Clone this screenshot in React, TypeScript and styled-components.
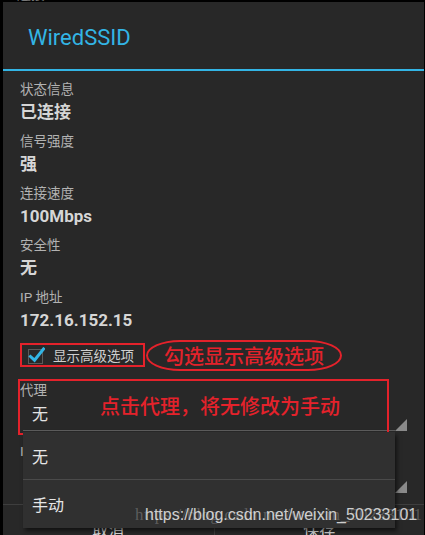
import React from "react";
import styled, { createGlobalStyle } from "styled-components";

const GlobalStyle = createGlobalStyle`
  html, body {
    margin: 0;
    padding: 0;
    background: #000;
  }
  body {
    font-family: Roboto, "Noto Sans CJK SC", sans-serif;
  }
`;

const ACCENT = "#33b5e5";
const NOTE_RED = "#e4222b";
const CJK = `Roboto, "Noto Sans CJK SC", sans-serif`;

const Screen = styled.div`
  width: 425px;
  height: 535px;
  overflow: hidden;
  background: #000;
  padding: 0 1px 0 3px;
  box-sizing: border-box;
  display: flex;
  flex-direction: column;
`;

const TopStrip = styled.div`
  height: 2px;
  overflow: hidden;
  flex-shrink: 0;
`;

const ClippedText = styled.div`
  margin-top: -13px;
  font-family: ${CJK};
  font-size: 14px;
  line-height: 14px;
  color: #777;
`;

const Dialog = styled.div`
  position: relative;
  flex: 1;
  background: #282828;
  display: flex;
  flex-direction: column;
  overflow: hidden;

  & > * {
    flex-shrink: 0;
  }
`;

const Header = styled.div`
  height: 64px;
  display: flex;
  align-items: center;
  padding: 3px 0 0 25px;
  box-sizing: content-box;
  border-bottom: 2px solid ${ACCENT};
`;

const Title = styled.h1`
  margin: 0;
  font-family: Roboto, sans-serif;
  font-weight: 400;
  font-size: 22px;
  color: ${ACCENT};
`;

const Body = styled.div`
  padding: 8px 17px 0 17px;
  display: flex;
  flex-direction: column;
`;

const Field = styled.div`
  display: flex;
  flex-direction: column;
  margin-bottom: 6px;
`;

const Label = styled.div`
  font-family: ${CJK};
  font-size: 13.5px;
  line-height: 20px;
  color: #b2b2b2;
  white-space: nowrap;
`;

const Value = styled.div`
  font-family: ${CJK};
  font-size: 17px;
  font-weight: 700;
  line-height: 26px;
  color: #d6d6d6;
`;

const CheckRow = styled.div`
  height: 32px;
  display: flex;
  align-items: center;
`;

const NoteBox = styled.div`
  border: 2px solid ${NOTE_RED};
  box-sizing: border-box;
`;

const CheckNote = styled(NoteBox)`
  width: 125px;
  height: 24px;
  display: flex;
  align-items: center;
  gap: 8px;
  padding-left: 6px;
`;

const CheckLabel = styled.span`
  font-family: ${CJK};
  font-size: 13.5px;
  color: #cfcfcf;
`;

const NoteOval = styled(NoteBox)`
  width: 196px;
  height: 31px;
  margin-left: 1px;
  border-radius: 34px / 15.5px;
  display: flex;
  align-items: center;
  justify-content: center;
`;

const NoteText = styled.span`
  font-family: "Noto Sans CJK SC", sans-serif;
  font-size: 20px;
  font-weight: 500;
  color: ${NOTE_RED};
  white-space: nowrap;
`;

const SpinnerField = styled.div<{ $top: number }>`
  position: relative;
  margin-top: ${(p) => p.$top}px;
  display: flex;
  flex-direction: column;
`;

const SpinnerRow = styled.div<{ $top?: number }>`
  display: flex;
  align-items: flex-end;
  margin: ${(p) => p.$top ?? 0}px 0 0 3px;
`;

const SpinnerValue = styled.div`
  flex: 1;
  height: 30px;
  line-height: 30px;
  padding-left: 9px;
  border-bottom: 1px solid #5c5c5c;
  font-family: ${CJK};
  font-size: 16px;
  color: #e2e2e2;
`;

const SpinnerNote = styled(NoteBox)`
  position: absolute;
  left: -2px;
  top: -1px;
  width: 371px;
  height: 56px;
  display: flex;
  align-items: center;
  padding: 0 0 4px 80px;
`;

const ButtonBar = styled.div`
  margin-top: 11px;
  border-top: 1px solid #3e3e3e;
  display: grid;
  grid-template-columns: 1fr 1fr;
`;

const BarButton = styled.div<{ $divider?: boolean }>`
  height: 48px;
  display: flex;
  align-items: center;
  justify-content: center;
  border-left: ${(p) => (p.$divider ? "1px solid #3e3e3e" : "none")};
  font-family: ${CJK};
  font-size: 16px;
  color: #d8d8d8;
`;

const Popup = styled.ul`
  position: absolute;
  left: 20px;
  top: 430px;
  width: 372px;
  margin: 0;
  padding: 0;
  list-style: none;
  background: #303030;
  box-shadow: 2px 3px 4px rgba(0, 0, 0, 0.55);
`;

const PopupItem = styled.li<{ $last?: boolean }>`
  height: 48px;
  box-sizing: border-box;
  display: flex;
  align-items: center;
  padding-left: 9px;
  border-bottom: ${(p) => (p.$last ? "none" : "1px solid #4a4a4a")};
  font-family: ${CJK};
  font-size: 16px;
  color: #e6e6e6;
`;

const Watermark = styled.div`
  position: absolute;
  left: 142px;
  top: 503px;
  font-family: "Liberation Sans", Arial, sans-serif;
  font-size: 16px;
  line-height: 20px;
  color: rgba(235, 235, 235, 0.85);
  white-space: nowrap;
  pointer-events: none;
`;

const WatermarkGhost = styled(Watermark)`
  left: 132px;
  font-family: "Liberation Serif", serif;
  font-size: 17px;
  color: rgba(200, 200, 200, 0.3);
  letter-spacing: 0.6px;
`;

const Checkbox = () => (
  <svg width="17" height="17" viewBox="0 0 17 17">
    <rect x="0.5" y="2.5" width="14" height="14" fill="none" stroke="#5a5a5a" />
    <path
      d="M2.5 9.5 L6.5 13.2 L15.5 2"
      fill="none"
      stroke={ACCENT}
      strokeWidth="3"
      strokeLinecap="square"
    />
  </svg>
);

const Corner = () => (
  <svg width="12" height="12" viewBox="0 0 12 12">
    <path d="M12 0 L12 12 L0 12 Z" fill="#8a8a8a" />
  </svg>
);

const info = [
  { label: "状态信息", value: "已连接" },
  { label: "信号强度", value: "强" },
  { label: "连接速度", value: "100Mbps" },
  { label: "安全性", value: "无" },
  { label: "IP 地址", value: "172.16.152.15" },
];

export default function App() {
  return (
    <>
      <GlobalStyle />
      <Screen>
        <TopStrip>
          <ClippedText>已连接</ClippedText>
        </TopStrip>
        <Dialog>
          <Header>
            <Title>WiredSSID</Title>
          </Header>
          <Body>
            {info.map((f) => (
              <Field key={f.label}>
                <Label>{f.label}</Label>
                <Value>{f.value}</Value>
              </Field>
            ))}
            <CheckRow>
              <CheckNote>
                <Checkbox />
                <CheckLabel>显示高级选项</CheckLabel>
              </CheckNote>
              <NoteOval>
                <NoteText>勾选显示高级选项</NoteText>
              </NoteOval>
            </CheckRow>
            <SpinnerField $top={9}>
              <Label>代理</Label>
              <SpinnerRow>
                <SpinnerValue>无</SpinnerValue>
                <Corner />
              </SpinnerRow>
              <SpinnerNote>
                <NoteText>点击代理，将无修改为手动</NoteText>
              </SpinnerNote>
            </SpinnerField>
            <SpinnerField $top={10}>
              <Label>IP 设置</Label>
              <SpinnerRow $top={1}>
                <SpinnerValue>DHCP</SpinnerValue>
                <Corner />
              </SpinnerRow>
            </SpinnerField>
          </Body>
          <ButtonBar>
            <BarButton>取消</BarButton>
            <BarButton $divider>保存</BarButton>
          </ButtonBar>
          <Popup>
            <PopupItem>无</PopupItem>
            <PopupItem $last>手动</PopupItem>
          </Popup>
          <WatermarkGhost>https://blog.csdn.net/weixin_50233101</WatermarkGhost>
          <Watermark>https://blog.csdn.net/weixin_50233101</Watermark>
        </Dialog>
      </Screen>
    </>
  );
}
